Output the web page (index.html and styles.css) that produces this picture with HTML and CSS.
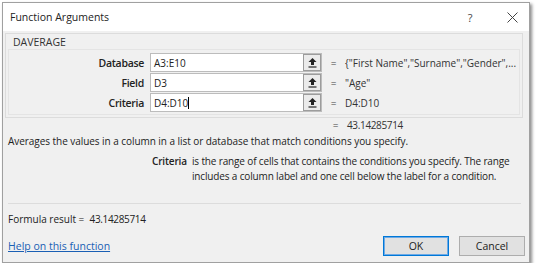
FILE: index.html
```html
<!DOCTYPE html>
<html lang="en">
<head>
  <meta charset="UTF-8" />
  <title>Function Arguments</title>
  <link rel="stylesheet" href="styles.css">
</head>
<body>
  <div class="dialog">
    <div class="titlebar">
      <span class="title">Function Arguments</span>
      <span class="tb-btn help">?</span>
      <span class="tb-btn close">
        <svg width="11" height="11" viewBox="0 0 11 11"><path d="M0.5 0.5L10.5 10.5M10.5 0.5L0.5 10.5" stroke="#444" stroke-width="1" fill="none"/></svg>
      </span>
    </div>

    <div class="body">
      <div class="group">
        <div class="group-name">DAVERAGE</div>
        <div class="args">
          <div class="arg">
            <label>Database</label>
            <div class="field"><span class="val">A3:E10</span><span class="pick"><svg width="11" height="11" viewBox="0 0 11 11"><path d="M5.5 1L1.5 5H4V8H7V5H9.5Z" fill="#222"/><path d="M1.5 10H9.5" stroke="#222" stroke-width="1.2"/></svg></span></div>
            <span class="eq">=</span>
            <span class="res">{"First Name","Surname","Gender",...</span>
          </div>
          <div class="arg">
            <label>Field</label>
            <div class="field"><span class="val">D3</span><span class="pick"><svg width="11" height="11" viewBox="0 0 11 11"><path d="M5.5 1L1.5 5H4V8H7V5H9.5Z" fill="#222"/><path d="M1.5 10H9.5" stroke="#222" stroke-width="1.2"/></svg></span></div>
            <span class="eq">=</span>
            <span class="res">"Age"</span>
          </div>
          <div class="arg">
            <label>Criteria</label>
            <div class="field"><span class="val">D4:D10<i class="caret"></i></span><span class="pick"><svg width="11" height="11" viewBox="0 0 11 11"><path d="M5.5 1L1.5 5H4V8H7V5H9.5Z" fill="#222"/><path d="M1.5 10H9.5" stroke="#222" stroke-width="1.2"/></svg></span></div>
            <span class="eq">=</span>
            <span class="res">D4:D10</span>
          </div>
        </div>
      </div>

      <div class="total"><span class="eq">=</span><span class="res num">43.14285714</span></div>
      <p class="desc">Averages the values in a column in a list or database that match conditions you specify.</p>
      <div class="argdesc">
        <b>Criteria</b>
        <span>is the range of cells that contains the conditions you specify. The range<br>includes a column label and one cell below the label for a condition.</span>
      </div>

      <div class="sep"></div>
      <div class="footer">
        <div class="result">Formula result =&nbsp;&nbsp;<span class="num">43.14285714</span></div>
        <div class="bottom">
          <a href="#" class="link">Help on this function</a>
          <div class="buttons">
            <button class="btn ok">OK</button>
            <button class="btn">Cancel</button>
          </div>
        </div>
      </div>
    </div>
  </div>
</body>
</html>
```

FILE: styles.css
```css
body { margin: 0; background: #fff; font-family: "Open Sans", "Noto Sans", sans-serif; font-size: 10px; color: #222; }
.dialog { margin: 2px 0 0 2px; width: 528px; height: 261px; border: 1px solid #a0a0a0; background: #f0f0f0; box-shadow: 2px 2px 3px rgba(0,0,0,0.45); display: flex; flex-direction: column; box-sizing: border-box; }
.titlebar { height: 28px; flex: none; background: #fff; display: flex; align-items: center; padding-left: 7px; }
.title { font-size: 10.5px; flex: 1; color: #222; }
.tb-btn { text-align: center; font-size: 11px; color: #444; display: flex; justify-content: center; }
.help { width: 50px; }
.close { width: 34px; }

.body { flex: 1; padding: 2px 5px 0 2px; display: flex; flex-direction: column; }
.group { border: 1px solid #dcdcdc; margin-right: 1px; }
.group-name { height: 15px; line-height: 17px; padding-left: 7px; font-size: 10.5px; color: #333; }
.args { margin: 0 2px 2px 2px; border: 1px solid #e4e4e4; padding: 3px 0 2px; display: flex; flex-direction: column; gap: 1px; }
.arg { display: flex; align-items: center; height: 19px; }
.arg label { width: 135px; text-align: right; font-weight: 600; font-size: 10.5px; letter-spacing: -0.3px; padding-right: 6px; }
.field { width: 172px; height: 19px; box-sizing: border-box; border: 1px solid #bcbcbc; background: #fff; display: flex; align-items: center; }
.val { flex: 1; padding-left: 3px; display: flex; align-items: center; }
.caret { display: inline-block; width: 1px; height: 12px; background: #000; }
.pick { width: 18px; height: 17px; border: 1px solid #9c9c9c; background: #ebebeb; display: flex; align-items: center; justify-content: center; box-sizing: border-box; }
.eq { width: 23px; text-align: center; color: #444; }
.res { color: #333; white-space: nowrap; }
.num { letter-spacing: -0.35px; }

.total { display: flex; align-items: center; height: 14px; padding-left: 319px; }
.desc { margin: 2px 0 0; padding-left: 3px; height: 15px; line-height: 15px; letter-spacing: -0.05px; }
.argdesc { display: flex; padding-left: 147px; line-height: 15px; letter-spacing: -0.15px; margin-top: 5px; }
.argdesc b { font-weight: 600; width: 40px; flex: none; }
.argdesc span { white-space: nowrap; }

.sep { margin: auto 3px 0 3px; height: 1px; background: #dcdcdc; }
.footer { padding: 7px 0 6px 3px; }
.result { height: 16px; line-height: 16px; }
.bottom { display: flex; align-items: center; justify-content: space-between; margin-top: 9px; }
.link { color: #1a5fb4; font-size: 10.5px; }
.buttons { display: flex; gap: 10px; margin-right: -1px; }
.btn { width: 66px; height: 20px; border: 1px solid #adadad; background: #e1e1e1; font-family: inherit; font-size: 10.5px; color: #222; padding: 0; }
.btn.ok { border: 1px solid #0078d7; box-shadow: inset 0 0 0 1px #6eaae6; }
```
